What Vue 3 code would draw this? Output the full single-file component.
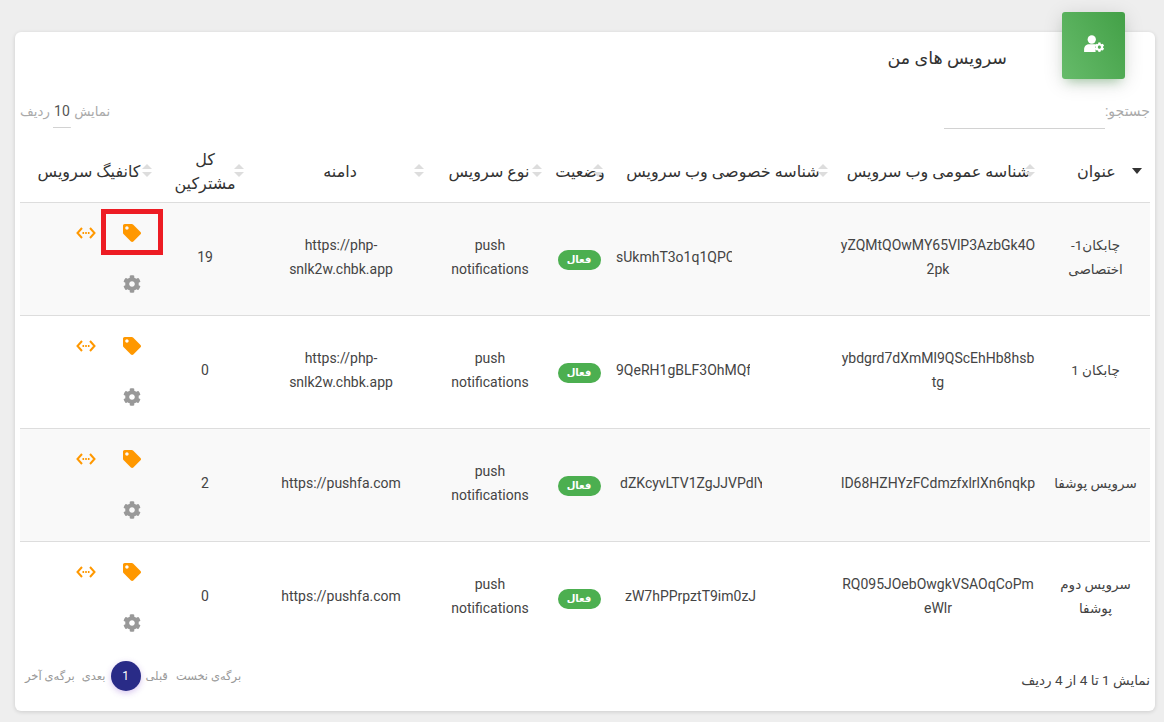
<script setup>
const columns = [
  { title: 'عنوان', arrow: 13, width: 107, active: true },
  { title: 'شناسه عمومی وب سرویس', arrow: 13, width: 209 },
  { title: 'شناسه خصوصی وب سرویس', arrow: 11, width: 222 },
  { title: 'وضعیت', arrow: 14, width: 64 },
  { title: 'نوع سرویس', arrow: 11, width: 118 },
  { title: 'دامنه', arrow: 11, width: 186 },
  { title: 'کل مشترکین', arrow: 5, width: 78 },
  { title: 'کانفیگ سرویس', arrow: 19, width: 146 },
]

const services = [
  {
    id: 1,
    title: 'چابکان1-اختصاصی',
    publicId: 'yZQMtQOwMY65VlP3AzbGk4O2pk',
    privateId: 'sUkmhT3o1q1QPC8xR2',
    clipLeft: 4,
    clipWidth: 116,
    domain: 'https://php-snlk2w.chbk.app',
    subscribers: 19,
  },
  {
    id: 2,
    title: 'چابکان 1',
    publicId: 'ybdgrd7dXmMl9QScEhHb8hsbtg',
    privateId: '9QeRH1gBLF3OhMQfT7a',
    clipLeft: 4,
    clipWidth: 134,
    domain: 'https://php-snlk2w.chbk.app',
    subscribers: 0,
  },
  {
    id: 3,
    title: 'سرویس پوشفا',
    publicId: 'lD68HZHYzFCdmzfxlrlXn6nqkp',
    privateId: 'dZKcyvLTV1ZgJJVPdlYw3',
    clipLeft: 8,
    clipWidth: 142,
    domain: 'https://pushfa.com',
    subscribers: 2,
  },
  {
    id: 4,
    title: 'سرویس دوم پوشفا',
    publicId: 'RQ095JOebOwgkVSAOqCoPmeWlr',
    privateId: 'zW7hPPrpztT9im0zJ',
    clipLeft: 13,
    clipWidth: 132,
    domain: 'https://pushfa.com',
    subscribers: 0,
  },
]

const cogPath = 'M487.4 315.7l-42.6-24.6c4.3-23.2 4.3-47 0-70.2l42.6-24.6c4.9-2.8 7.1-8.6 5.5-14-11.1-35.6-30-67.8-54.7-94.6-3.8-4.1-10-5.1-14.8-2.3L380.8 110c-17.9-15.4-38.5-27.3-60.8-35.1V25.8c0-5.6-3.9-10.5-9.4-11.7-36.7-8.2-74.3-7.8-109.2 0-5.5 1.2-9.4 6.1-9.4 11.7V75c-22.2 7.9-42.8 19.8-60.8 35.1L88.7 85.5c-4.9-2.8-11-1.9-14.8 2.3-24.7 26.7-43.6 58.9-54.7 94.6-1.7 5.4.6 11.2 5.5 14L67.3 221c-4.3 23.2-4.3 47 0 70.2l-42.6 24.6c-4.9 2.8-7.1 8.6-5.5 14 11.1 35.6 30 67.8 54.7 94.6 3.8 4.1 10 5.1 14.8 2.3l42.6-24.6c17.9 15.4 38.5 27.3 60.8 35.1v49.2c0 5.6 3.9 10.5 9.4 11.7 36.7 8.2 74.3 7.8 109.2 0 5.5-1.2 9.4-6.1 9.4-11.7v-49.2c22.2-7.9 42.8-19.8 60.8-35.1l42.6 24.6c4.9 2.8 11 1.9 14.8-2.3 24.7-26.7 43.6-58.9 54.7-94.6 1.5-5.5-.7-11.3-5.6-14.1zM256 336c-44.1 0-80-35.9-80-80s35.9-80 80-80 80 35.9 80 80-35.9 80-80 80z'
const tagPath = 'M0 252.118V48C0 21.49 21.49 0 48 0h204.118a48 48 0 0 1 33.941 14.059l211.882 211.882c18.745 18.745 18.745 49.137 0 67.882L293.823 497.941c-18.745 18.745-49.137 18.745-67.882 0L14.059 286.059A48 48 0 0 1 0 252.118zM112 64c-26.51 0-48 21.49-48 48s21.49 48 48 48 48-21.49 48-48-21.49-48-48-48z'
</script>

<template>
  <div class="page" dir="rtl">
    <div class="card">
      <div class="tile">
        <svg class="tile-icon" viewBox="0 0 24 20">
          <circle cx="9.500" cy="5" r="4.600" fill="#fff" />
          <path d="M1 19v-3c0-3.600 2.800-5.600 5.600-5.600h5.600c.6 0 1.200.1 1.600.3-.5 2.900-.5 5.700 0 8.300z" fill="#fff" />
          <svg x="12.500" y="8" width="11" height="11" viewBox="0 0 512 512">
            <path :d="cogPath" fill="#fff" />
          </svg>
        </svg>
      </div>

      <h4 class="card-title">سرویس های من</h4>

      <div class="toolbar">
        <label class="search">
          <span>جستجو:</span>
          <span class="search-input"></span>
        </label>
        <div class="length">
          نمایش <span class="length-value">10</span> ردیف
        </div>
      </div>

      <table class="services">
        <colgroup>
          <col v-for="col in columns" :key="col.title" :style="{ width: col.width + 'px' }" />
        </colgroup>
        <thead>
          <tr>
            <th v-for="col in columns" :key="col.title">
              <span>{{ col.title }}</span>
              <span v-if="col.active" class="sort-active" :style="{ right: col.arrow - 5 + 'px' }"></span>
              <span v-else class="sort" :style="{ right: col.arrow - 5 + 'px' }"></span>
            </th>
          </tr>
        </thead>
        <tbody>
          <tr v-for="(s, i) in services" :key="s.id">
            <td class="title-cell">{{ s.title }}</td>
            <td class="break">{{ s.publicId }}</td>
            <td class="private-cell" dir="ltr">
              <span class="clip" :style="{ width: s.clipWidth + 'px', marginLeft: s.clipLeft + 'px' }">{{ s.privateId }}</span>
            </td>
            <td class="status-cell"><span class="badge">فعال</span></td>
            <td class="type-cell" dir="ltr">push notifications</td>
            <td class="domain-cell" dir="ltr">{{ s.domain }}</td>
            <td>{{ s.subscribers }}</td>
            <td class="config-cell">
              <div class="config">
                <div class="action">
                  <svg class="icon" viewBox="0 0 512 512"><path :d="tagPath" fill="#ff9800" /></svg>
                  <div v-if="i === 0" class="highlight"></div>
                </div>
                <div class="action">
                  <svg class="icon code" viewBox="0 0 20 12">
                    <path d="M6 1 1.500 6 6 11M14 1l4.500 5-4.500 5" fill="none" stroke="#ff9800" stroke-width="2" />
                    <rect x="6.500" y="5" width="1.600" height="2" fill="#ff9800" />
                    <rect x="9.200" y="5" width="1.600" height="2" fill="#ff9800" />
                    <rect x="11.900" y="5" width="1.600" height="2" fill="#ff9800" />
                  </svg>
                </div>
                <div class="action">
                  <svg class="icon" viewBox="0 0 512 512"><path :d="cogPath" fill="#999" /></svg>
                </div>
              </div>
            </td>
          </tr>
        </tbody>
      </table>

      <div class="footer">
        <div class="info">نمایش 1 تا 4 از 4 ردیف</div>
        <div class="pager">
          <span>برگه‌ی نخست</span>
          <span>قبلی</span>
          <span class="current">1</span>
          <span>بعدی</span>
          <span>برگه‌ی آخر</span>
        </div>
      </div>
    </div>
  </div>
</template>

<style scoped>
.page {
  padding: 32px 9px 11px 15px;
  font-family: Roboto, "Noto Sans", "DejaVu Sans", sans-serif;
  color: #3c4858;
}
.card {
  position: relative;
  height: 679px;
  box-sizing: border-box;
  padding: 0 5px;
  background: #fff;
  border-radius: 6px;
  box-shadow: 0 1px 4px rgba(0, 0, 0, 0.14);
}
.tile {
  position: absolute;
  top: -20px;
  right: 30px;
  width: 63px;
  height: 67px;
  display: flex;
  align-items: center;
  justify-content: center;
  border-radius: 3px;
  background: linear-gradient(60deg, #66bb6a, #43a047);
  box-shadow: 0 4px 20px 0 rgba(0, 0, 0, 0.14), 0 7px 10px -5px rgba(76, 175, 80, 0.4);
}
.tile-icon {
  width: 22px;
  height: 18px;
  margin-bottom: 4px;
}
.card-title {
  margin: 0;
  height: 60px;
  padding-right: 143px;
  font-size: 17.5px;
  font-weight: 400;
  line-height: 52px;
  color: #333;
}
.toolbar {
  display: flex;
  justify-content: space-between;
  height: 48px;
  font-size: 13.3px;
  color: #aaa;
}
.search {
  display: flex;
  font-size: 14px;
}
.search > span:first-child {
  line-height: 38px;
}
.search-input {
  width: 161px;
  height: 36px;
  border-bottom: 1px solid #d2d2d2;
}
.length {
  line-height: 38px;
}
.length-value {
  display: inline-block;
  height: 36px;
  padding: 0 1px;
  color: #555;
  font-size: 14px;
  background: linear-gradient(#d2d2d2, #d2d2d2) bottom / 100% 1px no-repeat;
}
.services {
  width: 1130px;
  table-layout: fixed;
  border-collapse: collapse;
  font-size: 14px;
  line-height: 24px;
}
th {
  position: relative;
  height: 62px;
  padding: 2px 5px 0;
  box-sizing: border-box;
  border-bottom: 1px solid #ddd;
  font-size: 16px;
  font-weight: 400;
  text-align: center;
  color: #333;
}
th:nth-child(6) {
  padding-left: 11px;
}
th:nth-child(8) {
  padding: 2px 9px 0 1px;
}
.sort {
  position: absolute;
  top: 24px;
  width: 10px;
  height: 13px;
}
.sort::before,
.sort::after {
  content: "";
  position: absolute;
  left: 0;
  width: 0;
  height: 0;
  border-left: 5px solid transparent;
  border-right: 5px solid transparent;
}
.sort::before {
  top: 0;
  border-bottom: 5px solid #ddd;
}
.sort::after {
  bottom: 0;
  border-top: 5px solid #ddd;
}
.sort-active {
  position: absolute;
  top: 28px;
  width: 0;
  height: 0;
  border-left: 5px solid transparent;
  border-right: 5px solid transparent;
  border-top: 6px solid #333;
}
td {
  height: 113px;
  padding: 0 5px 4px;
  box-sizing: border-box;
  border-bottom: 1px solid #ddd;
  text-align: center;
  color: #444;
}
tbody tr:nth-child(odd) {
  background: #f9f9f9;
}
tbody tr:last-child td {
  border-bottom: none;
}
.title-cell {
  padding-right: 7px;
  font-size: 13.5px;
}
.break {
  padding: 0 7px 4px 6px;
  word-break: break-all;
}
.private-cell {
  text-align: left;
  padding: 0 0 4px;
}
.clip {
  display: inline-block;
  overflow: hidden;
  white-space: nowrap;
  vertical-align: middle;
}
.status-cell {
  padding: 0 5px 2px 3px;
}
.type-cell {
  padding-left: 7px;
}
.domain-cell {
  padding-left: 13px;
  overflow-wrap: anywhere;
}
.badge {
  display: inline-block;
  width: 43px;
  height: 20px;
  border-radius: 10px;
  background: #4caf50;
  color: #fff;
  font-size: 10px;
  font-weight: 700;
  line-height: 20px;
}
.config-cell {
  padding: 0 11px 1px 0;
}
.config {
  display: grid;
  grid-template-columns: 46px 46px;
  grid-auto-rows: 51px;
}
.action {
  position: relative;
  display: flex;
  align-items: center;
  justify-content: center;
}
.icon {
  width: 18px;
  height: 18px;
}
.icon.code {
  width: 20px;
  height: 12px;
}
.highlight {
  position: absolute;
  top: 2px;
  left: -8px;
  width: 62px;
  height: 46px;
  box-sizing: border-box;
  border: 5px solid #ed1c24;
}
.footer {
  display: flex;
  justify-content: space-between;
  align-items: flex-start;
  height: 56px;
}
.info {
  margin-top: 18px;
  font-size: 13.6px;
  color: #444;
}
.pager {
  display: flex;
  align-items: center;
  gap: 5px;
  margin-top: 7px;
  margin-left: 5px;
  font-size: 11.5px;
  color: #999;
}
.pager span:nth-child(2) {
  margin-right: 3px;
}
.pager span:nth-child(5) {
  margin-right: 2px;
}
.current {
  width: 30px;
  height: 30px;
  border-radius: 50%;
  background: #292b87;
  color: #fff;
  font-size: 12px;
  line-height: 30px;
  text-align: center;
  box-shadow: 0 2px 6px rgba(120, 60, 200, 0.3);
}
</style>

<style>
body {
  background: #eee;
}
</style>
